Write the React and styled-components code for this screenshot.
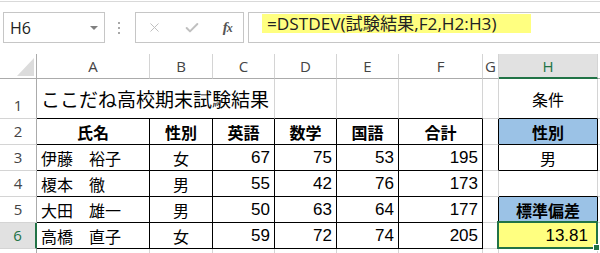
import React from 'react';
import styled, { createGlobalStyle } from 'styled-components';
import { X, Check } from 'lucide-react';

const GlobalStyle = createGlobalStyle`
  html, body {
    margin: 0;
    padding: 0;
    background: #fff;
    overflow: hidden;
  }
`;

const Page = styled.div`
  width: 600px;
  height: 253px;
  overflow: hidden;
  padding-top: 1px;
  box-sizing: border-box;
  font-family: "Open Sans", "Noto Sans CJK JP", sans-serif;
`;

const FormulaBar = styled.div`
  box-sizing: border-box;
  height: 53px;
  border-top: 1px solid #d9d9d9;
  padding: 10px 0 0 3px;
  display: flex;
  align-items: flex-start;
`;

const NameBox = styled.div`
  box-sizing: border-box;
  width: 102px;
  height: 31px;
  border: 1px solid #c6c6c6;
  display: flex;
  align-items: center;
  justify-content: space-between;
  padding: 0 6px;
  font-size: 16px;
  color: #222;
`;

const DropArrow = styled.span`
  width: 0;
  height: 0;
  border-left: 4px solid transparent;
  border-right: 4px solid transparent;
  border-top: 4px solid #808080;
`;

const Dots = styled.div`
  margin: 10px 0 0 13px;
  display: flex;
  flex-direction: column;
  gap: 3px;
  span {
    width: 2px;
    height: 2px;
    background: #a8a8a8;
  }
`;

const ButtonBox = styled.div`
  box-sizing: border-box;
  width: 109px;
  height: 31px;
  margin-left: 15px;
  border: 1px solid #c6c6c6;
  display: flex;
  align-items: center;
  justify-content: space-around;
  color: #c0c0c0;
`;

const Fx = styled.span`
  font-family: "Liberation Serif", serif;
  font-style: italic;
  font-weight: 700;
  font-size: 15px;
  color: #555;
  letter-spacing: -1px;
  small {
    font-size: 12px;
  }
`;

const FormulaBox = styled.div`
  box-sizing: border-box;
  flex: 1;
  height: 31px;
  margin: 0 -10px 0 4px;
  border: 1px solid #c6c6c6;
  padding: 1px 0 0 13px;
`;

const Highlight = styled.div`
  box-sizing: border-box;
  width: 269px;
  height: 19px;
  background: #ffff80;
  padding-left: 5px;
  font-size: 17.2px;
  line-height: 19px;
  color: #222;
  white-space: nowrap;
`;

const Sheet = styled.div`
  display: grid;
  grid-template-columns: 37px 113px 63px 62px 62px 62px 84px 16px 99px 1fr;
  grid-template-rows: 25px 40px repeat(7, 26px);
`;

const Corner = styled.div`
  box-sizing: border-box;
  border-right: 1px solid #ababab;
  border-bottom: 1px solid #ababab;
  svg {
    display: block;
  }
`;

const ColHead = styled.div`
  box-sizing: border-box;
  border-right: 1px solid #d4d4d4;
  border-bottom: ${p => (p.$active ? '2px solid #217346' : '1px solid #ababab')};
  background: ${p => (p.$active ? '#e1e1e1' : '#fff')};
  color: ${p => (p.$active ? '#217346' : '#444')};
  display: flex;
  align-items: center;
  justify-content: center;
  font-size: 15px;
  padding-top: ${p => (p.$active ? '1px' : '0')};
`;

const RowHead = styled.div`
  box-sizing: border-box;
  border-right: ${p => (p.$active ? '2px solid #217346' : '1px solid #ababab')};
  border-bottom: 1px solid #d4d4d4;
  background: ${p => (p.$active ? '#e1e1e1' : '#fff')};
  color: ${p => (p.$active ? '#217346' : '#444')};
  display: flex;
  align-items: flex-end;
  justify-content: center;
  padding-bottom: 3px;
  font-size: 15px;
  line-height: 20px;
`;

const justify = { left: 'flex-start', center: 'center', right: 'flex-end' };

const Cell = styled.div`
  position: relative;
  box-sizing: border-box;
  grid-column: ${p => (p.$span ? `span ${p.$span}` : 'auto')};
  border-right: 1px solid ${p => (p.$rb ? '#000' : '#d4d4d4')};
  border-bottom: 1px solid ${p => (p.$bb ? '#000' : '#d4d4d4')};
  background: ${p => p.$bg || '#fff'};
  display: flex;
  align-items: center;
  justify-content: ${p => justify[p.$align || 'left']};
  padding: 0 4px 0 4px;
  font-family: "Liberation Sans", "Noto Sans CJK JP", sans-serif;
  font-size: ${p => (p.$num ? '17px' : p.$size || '16px')};
  font-weight: ${p => (p.$bold ? 700 : 400)};
  color: #000;
  white-space: nowrap;
`;

const Selected = styled(Cell)`
  padding-right: 9px;
  &::after {
    content: '';
    position: absolute;
    left: -2px;
    top: -2px;
    right: -1px;
    bottom: -1px;
    border: 2px solid #217346;
  }
  &::before {
    content: '';
    position: absolute;
    right: -3px;
    bottom: -3px;
    width: 5px;
    height: 5px;
    background: #217346;
    border: 1px solid #fff;
    z-index: 2;
  }
`;

const students = [
  ['伊藤　裕子', '女', 67, 75, 53, 195],
  ['榎本　徹', '男', 55, 42, 76, 173],
  ['大田　雄一', '男', 50, 63, 64, 177],
  ['高橋　直子', '女', 59, 72, 74, 205],
];

const heads = ['氏名', '性別', '英語', '数学', '国語', '合計'];
const blue = '#9bc2e6';

function Criteria({ row }) {
  if (row === 2) return <Cell $bg={blue} $bold $align="center" $rb $bb>性別</Cell>;
  if (row === 3) return <Cell $align="center" $rb $bb>男</Cell>;
  if (row === 4) return <Cell $bb />;
  if (row === 5) return <Cell $bg={blue} $bold $align="center" $rb $bb>標準偏差</Cell>;
  if (row === 6) return <Selected $bg="#ffff80" $align="right" $num>13.81</Selected>;
  return <Cell />;
}

function StudentRow({ row, data }) {
  const [name, sex, ...scores] = data;
  return (
    <>
      <RowHead $active={row === 6}>{row}</RowHead>
      <Cell $rb $bb>{name}</Cell>
      <Cell $rb $bb $align="center">{sex}</Cell>
      {scores.map((s, i) => (
        <Cell key={i} $rb $bb $align="right" $num>{s}</Cell>
      ))}
      <Cell $rb={row === 3 || row === 5} />
      <Criteria row={row} />
      <Cell />
    </>
  );
}

export default function App() {
  return (
    <Page>
      <GlobalStyle />
      <FormulaBar>
        <NameBox>
          <span>H6</span>
          <DropArrow />
        </NameBox>
        <Dots><span /><span /><span /></Dots>
        <ButtonBox>
          <X size={15} strokeWidth={1.6} />
          <Check size={16} strokeWidth={3} />
          <Fx>f<small>x</small></Fx>
        </ButtonBox>
        <FormulaBox>
          <Highlight>=DSTDEV(試験結果,F2,H2:H3)</Highlight>
        </FormulaBox>
      </FormulaBar>

      <Sheet>
        <Corner>
          <svg width="36" height="24" viewBox="0 0 36 24">
            <polygon points="17,22 34,22 34,4" fill="#dcdcdc" />
          </svg>
        </Corner>
        {['A', 'B', 'C', 'D', 'E', 'F', 'G', 'H', ''].map(c => (
          <ColHead key={c || 'I'} $active={c === 'H'}>{c}</ColHead>
        ))}

        <RowHead>1</RowHead>
        <Cell $span={3} $bb $size="19px">ここだね高校期末試験結果</Cell>
        <Cell $bb />
        <Cell $bb />
        <Cell $bb />
        <Cell />
        <Cell $bb $align="center">条件</Cell>
        <Cell />

        <RowHead>2</RowHead>
        {heads.map(h => (
          <Cell key={h} $rb $bb $bold $align="center">{h}</Cell>
        ))}
        <Cell $rb />
        <Criteria row={2} />
        <Cell />

        {students.map((s, i) => (
          <StudentRow key={i} row={i + 3} data={s} />
        ))}

        <RowHead />
        {Array.from({ length: 9 }).map((_, i) => (
          <Cell key={i} />
        ))}
      </Sheet>
    </Page>
  );
}
